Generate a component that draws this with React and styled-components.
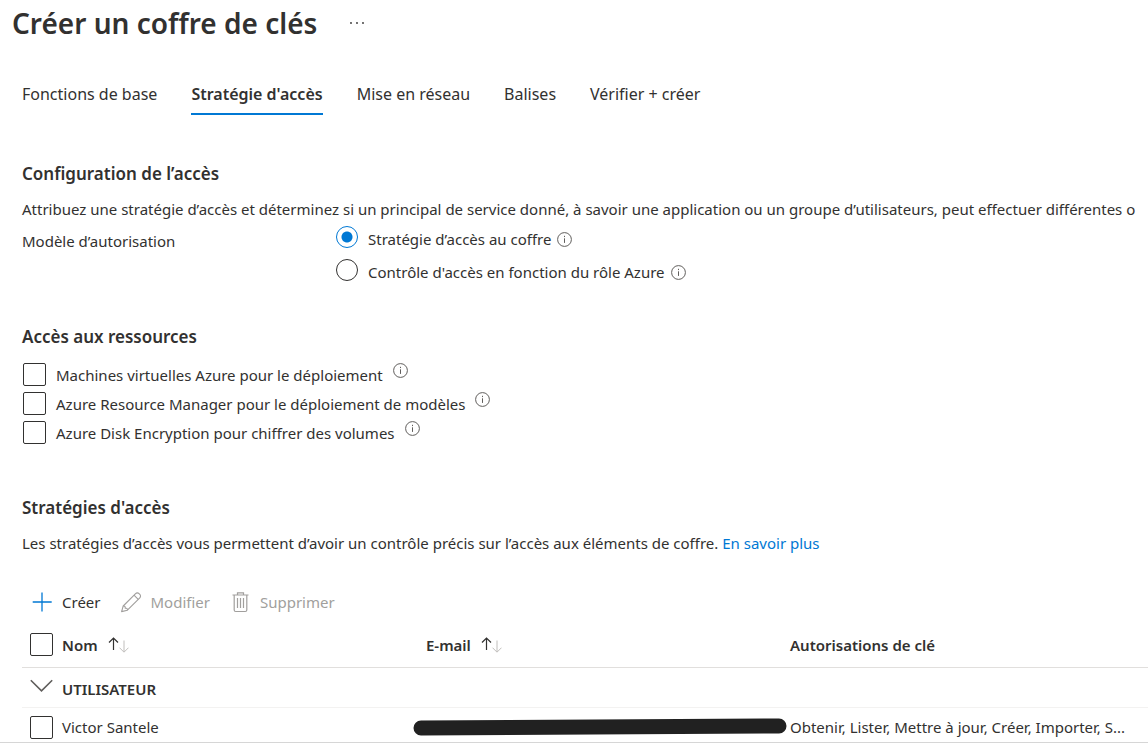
import React from "react";
import styled, { createGlobalStyle } from "styled-components";

const GlobalStyle = createGlobalStyle`
  *, *::before, *::after { box-sizing: border-box; }
  body {
    margin: 0;
    background: #fff;
    color: #323130;
    font-family: "Segoe UI", "Noto Sans", "Open Sans", sans-serif;
    font-size: 15px;
    line-height: 20px;
    overflow-x: hidden;
  }
  button { font: inherit; color: inherit; background: none; border: 0; padding: 0; cursor: pointer; }
  svg { display: block; flex: none; }
`;

const Page = styled.div`
  border-bottom: 1px solid #d6d6d6;
`;

const TitleBar = styled.header`
  display: flex;
  align-items: center;
  gap: 32px;
  height: 46px;
  padding-left: 12px;
`;

const Title = styled.h1`
  margin: 0;
  font-size: 28px;
  line-height: 40px;
  font-weight: 600;
`;

const Content = styled.main`
  padding-left: 22px;
`;

const Tabs = styled.nav`
  display: flex;
  gap: 34px;
  padding-top: 34px;
  font-size: 16px;
`;

const Tab = styled.a`
  padding: 2px 0 6px;
  line-height: 25px;
  color: inherit;
  text-decoration: none;
  white-space: nowrap;
  border-bottom: 2px solid ${(p) => (p.$active ? "#0078d4" : "transparent")};
  font-weight: ${(p) => (p.$active ? 600 : 400)};
`;

const Section = styled.section`
  padding-top: ${(p) => p.$top}px;
`;

const Heading = styled.h2`
  margin: 0;
  font-size: 17px;
  line-height: 24px;
  font-weight: 600;
`;

const Text = styled.p`
  margin: 0;
  padding-top: 13px;
  white-space: nowrap;
`;

const Link = styled.a`
  color: #0078d4;
  text-decoration: none;
`;

const Field = styled.div`
  display: flex;
  padding-top: 7px;
`;

const FieldLabel = styled.div`
  width: 314px;
  padding-top: 5px;
`;

const Options = styled.div`
  display: flex;
  flex-direction: column;
  gap: ${(p) => p.$gap}px;
  padding-top: ${(p) => p.$top || 0}px;
`;

const RadioOption = styled.div`
  display: flex;
  align-items: center;
  gap: 6px;
`;

const RadioLabel = styled.label`
  display: flex;
  gap: 10px;
  line-height: 26px;
`;

const CheckOption = styled.div`
  display: flex;
  align-items: flex-start;
  gap: 10px;
  padding-left: 1px;
`;

const CheckLabel = styled.label`
  display: flex;
  align-items: center;
  gap: 10px;
`;

const Radio = styled.input`
  appearance: none;
  width: 22px;
  height: 22px;
  margin: 0;
  border: 1px solid #323130;
  border-radius: 50%;
  &:checked {
    border-color: #0078d4;
    background: radial-gradient(circle, #0078d4 5px, #fff 6px);
  }
`;

const Checkbox = styled.input`
  appearance: none;
  display: block;
  width: 23px;
  height: 23px;
  margin: 0;
  border: 1px solid #323130;
  border-radius: 2px;
  &:checked { background: #0078d4; }
`;

const Toolbar = styled.div`
  display: flex;
  gap: 20px;
  padding: 37px 0 0 10px;
`;

const Command = styled.button`
  display: flex;
  align-items: center;
  gap: 9px;
  height: 24px;
  &:disabled { color: #a19f9d; cursor: default; }
`;

const Table = styled.table`
  width: 100%;
  margin-top: 9px;
  border-collapse: collapse;
  table-layout: fixed;
  white-space: nowrap;
`;

const Row = styled.tr`
  height: ${(p) => p.$height}px;
  border-bottom: ${(p) => (p.$line ? `1px solid ${p.$line}` : "0")};
`;

const Cell = styled.td`
  padding: ${(p) => p.$top || 0}px 0 0;
  text-align: left;
  font-weight: 400;
`;

const HeadCell = styled.th`
  padding: ${(p) => p.$top || 0}px 0 0;
  text-align: left;
  font-weight: 600;
`;

const SelectCell = styled(Cell)`
  padding-left: 8px;
`;

const Col = styled.col`
  width: ${(p) => p.$width};
`;

const SortButton = styled.button`
  display: flex;
  align-items: center;
  gap: 10px;
  font-weight: 600;
`;

const Redaction = styled.svg`
  margin-left: -13px;
`;

const InfoIcon = () => (
  <svg width="15" height="15" viewBox="0 0 15 15" fill="none" stroke="#605e5c" role="img" aria-label="Info">
    <circle cx="7.5" cy="7.5" r="6.9" />
    <path d="M7.5 6.3v4.6M7.5 3.8v1.3" />
  </svg>
);

const MoreIcon = () => (
  <svg width="16" height="4" viewBox="0 0 16 4" fill="#323130" aria-hidden="true">
    <circle cx="2" cy="2" r="0.9" />
    <circle cx="8" cy="2" r="0.9" />
    <circle cx="14" cy="2" r="0.9" />
  </svg>
);

const PlusIcon = () => (
  <svg width="21" height="20" viewBox="0 0 21 20" stroke="#0078d4" strokeWidth="1.3" aria-hidden="true">
    <path d="M10 0.5v19M0.7 10h19" />
  </svg>
);

const PencilIcon = () => (
  <svg width="21" height="21" viewBox="0 0 21 21" fill="none" stroke="#a19f9d" strokeWidth="1.1" strokeLinejoin="round" aria-hidden="true">
    <path d="M0.6 19.6l1.6-5.6L14.6 1.6a2.4 2.4 0 0 1 3.4 0l.8.8a2.4 2.4 0 0 1 0 3.4L6.4 18.2z" />
    <path d="M2.2 14c1.2-.2 2 .4 2 1.3v.9h.9c1 0 1.5.8 1.3 2M13 3.2l4.2 4.2" />
  </svg>
);

const TrashIcon = () => (
  <svg width="21" height="21" viewBox="-2 0 21 21" fill="none" stroke="#a19f9d" strokeWidth="1.2" aria-hidden="true">
    <path d="M0.5 3h16M5.5 3V0.8h6V3M2.2 3v15q0 1.5 1.5 1.5h9.6q1.5 0 1.5-1.5V3" />
    <path d="M5.5 6v10M8.5 6v10M11.5 6v10" />
  </svg>
);

const SortIcon = () => (
  <svg width="21" height="16" viewBox="0 0 21 16" fill="none" aria-hidden="true">
    <path d="M5.5 13V1.2M1 5.5l4.5-4.5L10 5.5" stroke="#323130" strokeWidth="1.2" />
    <path d="M16 3.5v11.5M11.5 10.7l4.5 4.5 4.5-4.5" stroke="#c0bebc" />
  </svg>
);

const ChevronIcon = () => (
  <svg width="23" height="14" viewBox="0 0 23 14" fill="none" stroke="#605e5c" strokeWidth="1.6" aria-hidden="true">
    <path d="M0.8 1.2l10.7 10.6L22.2 1.2" />
  </svg>
);

const tabs = ["Fonctions de base", "Stratégie d'accès", "Mise en réseau", "Balises", "Vérifier + créer"];
const models = ["Stratégie d’accès au coffre", "Contrôle d'accès en fonction du rôle Azure"];
const resources = [
  "Machines virtuelles Azure pour le déploiement",
  "Azure Resource Manager pour le déploiement de modèles",
  "Azure Disk Encryption pour chiffrer des volumes",
];

export default function App() {
  return (
    <Page>
      <GlobalStyle />
      <TitleBar>
        <Title>Créer un coffre de clés</Title>
        <button type="button" aria-label="Plus"><MoreIcon /></button>
      </TitleBar>
      <Content>
        <Tabs>
          {tabs.map((t, i) => (
            <Tab key={t} href="#" $active={i === 1}>{t}</Tab>
          ))}
        </Tabs>

        <Section $top={47}>
          <Heading>Configuration de l’accès</Heading>
          <Text>
            Attribuez une stratégie d’accès et déterminez si un principal de service donné, à savoir une application ou un groupe d’utilisateurs, peut effectuer différentes o
          </Text>
          <Field role="radiogroup" aria-labelledby="model">
            <FieldLabel id="model">Modèle d’autorisation</FieldLabel>
            <Options $gap={7}>
              {models.map((m, i) => (
                <RadioOption key={m}>
                  <RadioLabel>
                    <Radio type="radio" name="model" defaultChecked={i === 0} />
                    {m}
                  </RadioLabel>
                  <InfoIcon />
                </RadioOption>
              ))}
            </Options>
          </Field>
        </Section>

        <Section $top={40}>
          <Heading>Accès aux ressources</Heading>
          <Options $gap={6} $top={14}>
            {resources.map((r) => (
              <CheckOption key={r}>
                <CheckLabel>
                  <Checkbox type="checkbox" />
                  {r}
                </CheckLabel>
                <InfoIcon />
              </CheckOption>
            ))}
          </Options>
        </Section>

        <Section $top={52}>
          <Heading>Stratégies d'accès</Heading>
          <Text>
            Les stratégies d’accès vous permettent d’avoir un contrôle précis sur l’accès aux éléments de coffre.{" "}
            <Link href="#">En savoir plus</Link>
          </Text>
          <Toolbar>
            <Command type="button"><PlusIcon />Créer</Command>
            <Command type="button" disabled><PencilIcon />Modifier</Command>
            <Command type="button" disabled><TrashIcon />Supprimer</Command>
          </Toolbar>
          <Table>
            <colgroup>
              <Col $width="40px" />
              <Col $width="364px" />
              <Col $width="364px" />
              <Col $width="auto" />
            </colgroup>
            <thead>
              <Row $height={44} $line="#e1dfdd">
                <SelectCell><Checkbox type="checkbox" aria-label="Tout sélectionner" /></SelectCell>
                <HeadCell><SortButton type="button">Nom<SortIcon /></SortButton></HeadCell>
                <HeadCell><SortButton type="button">E-mail<SortIcon /></SortButton></HeadCell>
                <HeadCell>Autorisations de clé</HeadCell>
              </Row>
            </thead>
            <tbody>
              <Row $height={40} $line="#f3f2f1">
                <SelectCell><button type="button" aria-label="Réduire"><ChevronIcon /></button></SelectCell>
                <HeadCell colSpan={3} $top={4}>UTILISATEUR</HeadCell>
              </Row>
              <Row $height={35}>
                <SelectCell $top={5}><Checkbox type="checkbox" aria-label="Victor Santele" /></SelectCell>
                <Cell $top={5}>Victor Santele</Cell>
                <Cell $top={5}>
                  <Redaction width="374" height="18" viewBox="0 0 374 18" role="img" aria-label="E-mail masqué">
                    <path d="M8 10L366 8" stroke="#212121" strokeWidth="15" strokeLinecap="round" />
                  </Redaction>
                </Cell>
                <Cell $top={5}>Obtenir, Lister, Mettre à jour, Créer, Importer, S...</Cell>
              </Row>
            </tbody>
          </Table>
        </Section>
      </Content>
    </Page>
  );
}
